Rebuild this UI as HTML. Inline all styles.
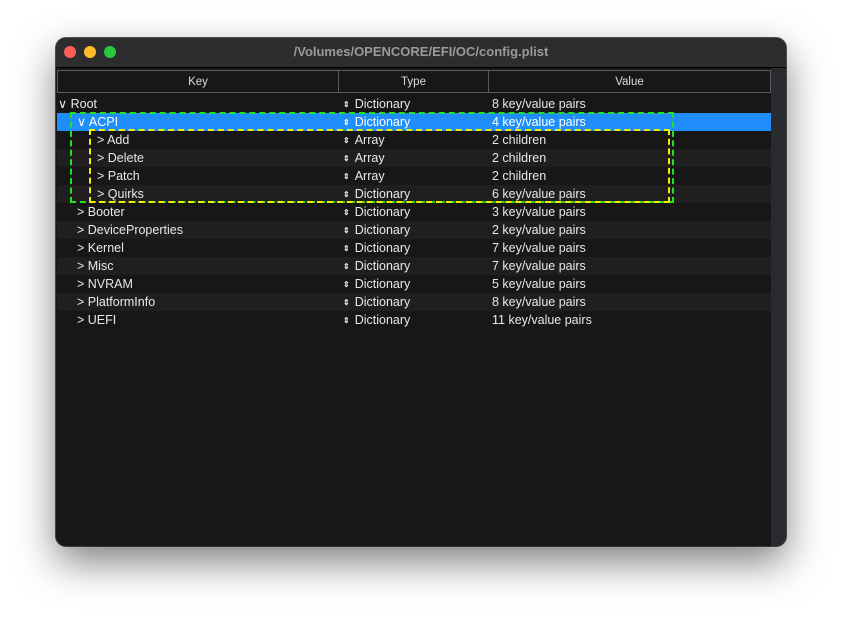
<!DOCTYPE html>
<html><head><style>
body{margin:0;width:842px;height:620px;background:#fff;position:relative;overflow:hidden;font-family:"Liberation Sans",sans-serif;}
.win{position:absolute;left:56px;top:38px;width:730px;height:508px;background:#171717;border-radius:10px;box-shadow:0 16px 40px rgba(0,0,0,.5),0 0 0 1px #555;overflow:hidden;}
.tb{position:absolute;left:0;top:0;width:730px;height:29px;background:#2d2d2d;border-bottom:1px solid #000;}
.tb .t{position:absolute;left:0;right:0;top:6px;text-align:center;color:#9a9a9a;font-weight:bold;font-size:13px;}
.dot{position:absolute;top:8px;width:12px;height:12px;border-radius:50%;}
.sb{position:absolute;left:715px;top:30px;width:15px;height:478px;background:#2a2b2f;}
.hdr{position:absolute;top:32px;left:1px;border:1px solid #5b5b5b;color:#ddd;font-size:11.5px;text-align:center;line-height:22px;box-sizing:border-box;height:23px;}
.row{position:absolute;left:1px;width:714px;height:18px;font-size:12.5px;color:#e8e8e8;line-height:18px;}
.row span{position:absolute;top:0;}
.alt{background:#1f1f1f;}
.sel{background:#1f8efa;color:#fff;}
.k{white-space:nowrap;}
.ty{left:286px;}
.va{left:435px;}
.ud{font-size:8px;margin-right:5px;position:relative;top:-1px;}
</style></head><body>
<div class="win">
<div class="tb"><div class="dot" style="left:8px;background:#fe5f57"></div><div class="dot" style="left:28px;background:#febc2e"></div><div class="dot" style="left:48px;background:#28c840"></div><div class="t">/Volumes/OPENCORE/EFI/OC/config.plist</div></div>
<div class="sb"></div>
<div class="hdr" style="left:1px;width:282px">Key</div>
<div class="hdr" style="left:282px;width:151px">Type</div>
<div class="hdr" style="left:432px;width:283px">Value</div>
<div class="row" style="top:57px"><span class="k" style="left:1px">∨ Root</span><span class="ty"><b class="ud">⇕</b>Dictionary</span><span class="va">8 key/value pairs</span></div>
<div class="row sel" style="top:75px"><span class="k" style="left:20px">∨ ACPI</span><span class="ty"><b class="ud">⇕</b>Dictionary</span><span class="va">4 key/value pairs</span></div>
<div class="row" style="top:93px"><span class="k" style="left:40px">&gt; Add</span><span class="ty"><b class="ud">⇕</b>Array</span><span class="va">2 children</span></div>
<div class="row alt" style="top:111px"><span class="k" style="left:40px">&gt; Delete</span><span class="ty"><b class="ud">⇕</b>Array</span><span class="va">2 children</span></div>
<div class="row" style="top:129px"><span class="k" style="left:40px">&gt; Patch</span><span class="ty"><b class="ud">⇕</b>Array</span><span class="va">2 children</span></div>
<div class="row alt" style="top:147px"><span class="k" style="left:40px">&gt; Quirks</span><span class="ty"><b class="ud">⇕</b>Dictionary</span><span class="va">6 key/value pairs</span></div>
<div class="row" style="top:165px"><span class="k" style="left:20px">&gt; Booter</span><span class="ty"><b class="ud">⇕</b>Dictionary</span><span class="va">3 key/value pairs</span></div>
<div class="row alt" style="top:183px"><span class="k" style="left:20px">&gt; DeviceProperties</span><span class="ty"><b class="ud">⇕</b>Dictionary</span><span class="va">2 key/value pairs</span></div>
<div class="row" style="top:201px"><span class="k" style="left:20px">&gt; Kernel</span><span class="ty"><b class="ud">⇕</b>Dictionary</span><span class="va">7 key/value pairs</span></div>
<div class="row alt" style="top:219px"><span class="k" style="left:20px">&gt; Misc</span><span class="ty"><b class="ud">⇕</b>Dictionary</span><span class="va">7 key/value pairs</span></div>
<div class="row" style="top:237px"><span class="k" style="left:20px">&gt; NVRAM</span><span class="ty"><b class="ud">⇕</b>Dictionary</span><span class="va">5 key/value pairs</span></div>
<div class="row alt" style="top:255px"><span class="k" style="left:20px">&gt; PlatformInfo</span><span class="ty"><b class="ud">⇕</b>Dictionary</span><span class="va">8 key/value pairs</span></div>
<div class="row" style="top:273px"><span class="k" style="left:20px">&gt; UEFI</span><span class="ty"><b class="ud">⇕</b>Dictionary</span><span class="va">11 key/value pairs</span></div>
<div style="position:absolute;left:14px;top:74px;width:604px;height:91px;border:2px dashed #1ee31e;box-sizing:border-box"></div>
<div style="position:absolute;left:33px;top:91px;width:581px;height:74px;border:2px dashed #f2f200;box-sizing:border-box"></div>
</div>
</body></html>
